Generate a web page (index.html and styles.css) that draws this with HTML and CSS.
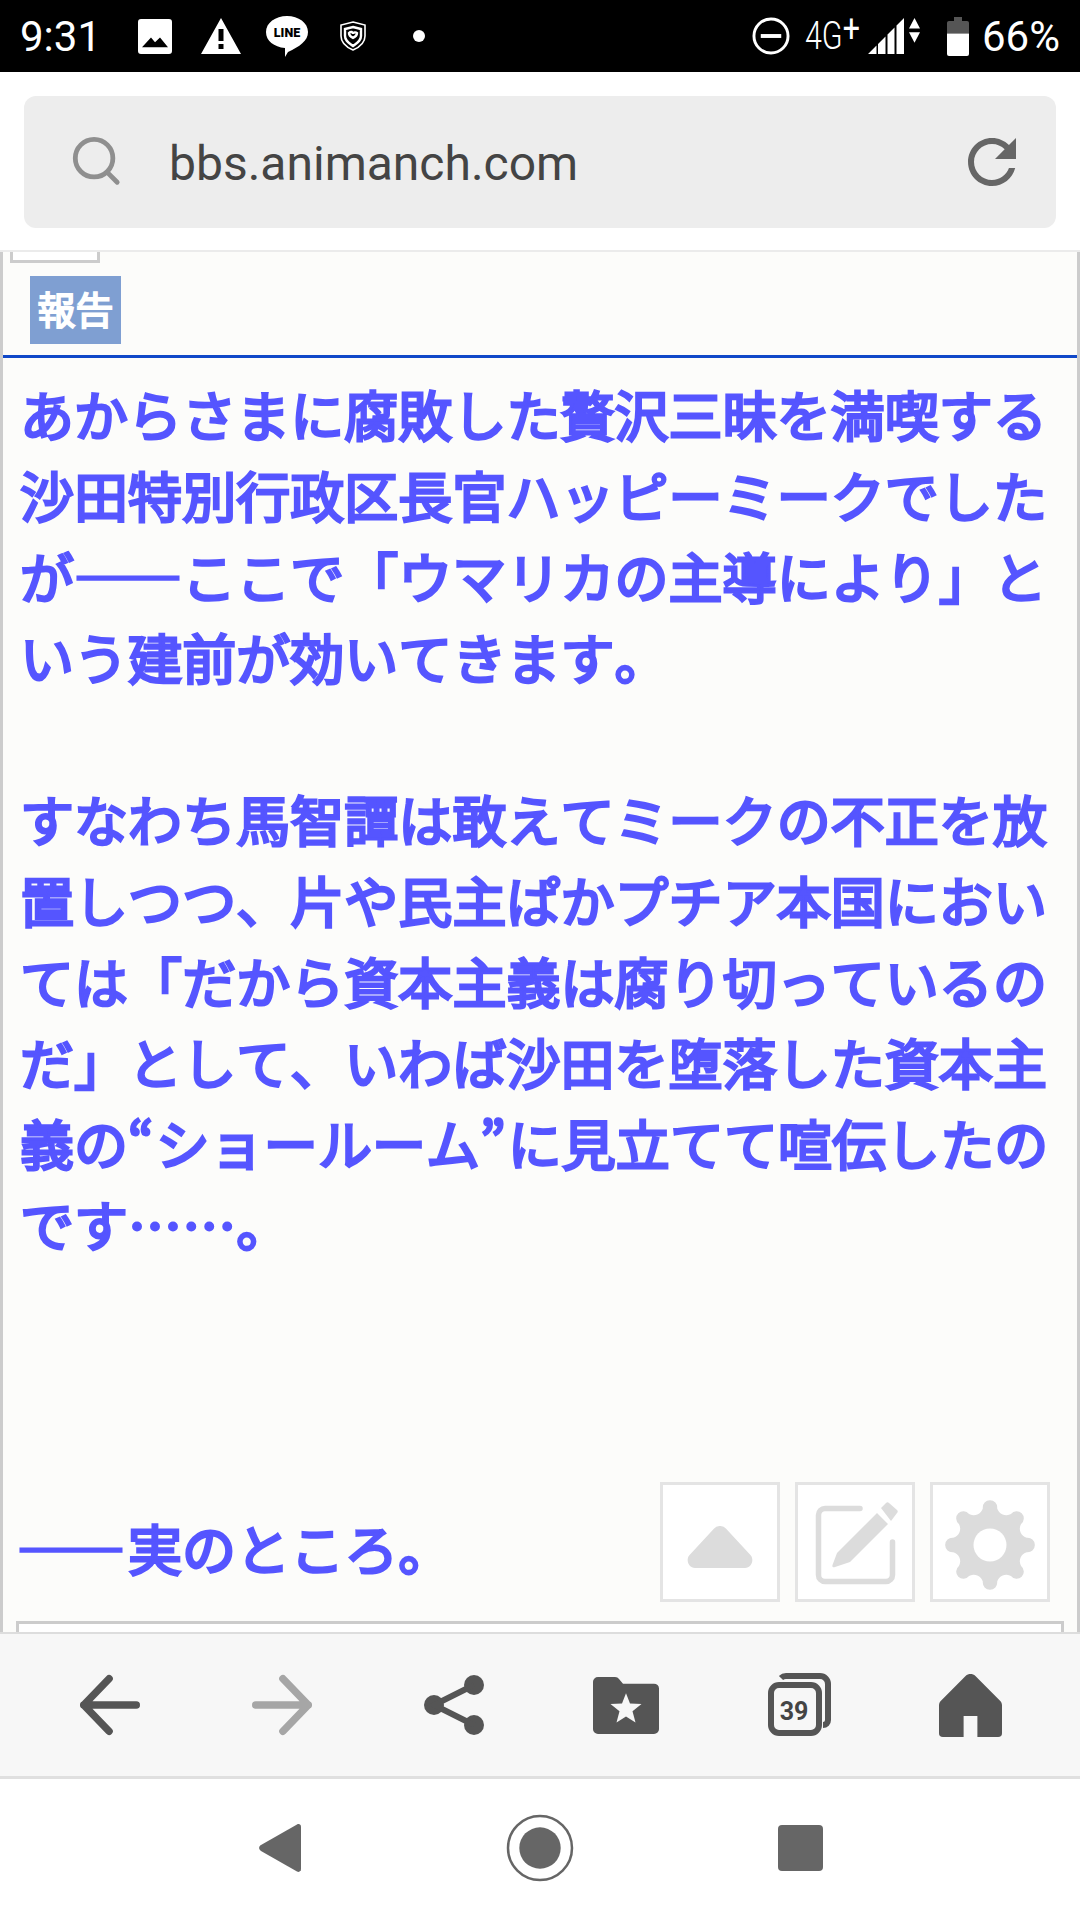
FILE: index.html
```html
<!DOCTYPE html>
<html lang="ja">
<head>
<meta charset="utf-8">
<title>bbs.animanch.com</title>
<link rel="stylesheet" href="styles.css">
</head>
<body>
<div class="screen">
  <header class="status">
    <div class="status-left">
      <span class="clock">9:31</span>
      <svg class="ic-image" width="34" height="35" viewBox="0 0 34 36" preserveAspectRatio="none"><path fill="#fff" fill-rule="evenodd" d="M3 0h28a3 3 0 0 1 3 3v30a3 3 0 0 1-3 3H3a3 3 0 0 1-3-3V3a3 3 0 0 1 3-3zM4 29h26l-8-10-5 5-4-5z"/></svg>
      <svg class="ic-warn" width="40" height="36" viewBox="0 0 40 36"><path fill="#fff" fill-rule="evenodd" d="M20 0L40 36H0zM17.500 11v12h5V11zM17.500 26v5h5v-5z"/></svg>
      <svg class="ic-line" width="42" height="41" viewBox="0 0 42 41"><path fill="#fff" d="M21 0c11.600 0 21 6.800 21 16 0 9-8.500 14.500-20 20l-3 5v-9C8 31 0 25 0 16 0 6.800 9.400 0 21 0z"/><text class="line-label" x="21" y="21" text-anchor="middle">LINE</text></svg>
      <svg class="ic-shield" width="26" height="30" viewBox="0 0 26 30"><path fill="none" stroke="#fff" stroke-width="1.600" d="M13 1l12 3v11c0 7-5 11-12 14C6 26 1 22 1 15V4z"/><path fill="none" stroke="#fff" stroke-width="2.400" d="M13 6l8 2v7c0 5-4 7-8 10-4-3-8-5-8-10V8zM9 12c2-2 4-1 4 1 0-2 3-2 4-1 0 3-2 4-4 5-2-1-4-2-4-5z"/></svg>
      <span class="dot"></span>
    </div>
    <div class="status-right">
      <svg class="ic-dnd" width="38" height="38" viewBox="0 0 39 39"><circle cx="19.500" cy="19.500" r="17.500" fill="none" stroke="#fff" stroke-width="3"/><rect x="9" y="17.500" width="21" height="4" fill="#fff"/></svg>
      <span class="net">4G<span class="net-plus">+</span></span>
      <svg class="ic-signal" width="53" height="36" viewBox="0 0 53 38" preserveAspectRatio="none"><path fill="#fff" d="M0 38L8.500 29V38zM10 27.400L17.500 19.500V38H10zM19.500 17.400L26.500 10V38H19.500zM28.500 7.900L36 0V38H28.500z"/><path fill="#fff" d="M46.500 0l5.500 11H41zM41 15h11l-5.500 11z"/></svg>
      <svg class="ic-battery" width="22" height="39" viewBox="0 0 22 40" preserveAspectRatio="none"><path fill="#555" d="M7 0h8v4h5a2 2 0 0 1 2 2v11H0V6a2 2 0 0 1 2-2h5z"/><path fill="#fff" d="M0 17h22v21a2 2 0 0 1-2 2H2a2 2 0 0 1-2-2z"/></svg>
      <span class="battery-text">66%</span>
    </div>
  </header>

  <div class="address-wrap">
    <div class="address">
      <svg class="ic-search" width="52" height="52" viewBox="0 0 52 54"><circle cx="24" cy="23" r="19.500" fill="none" stroke="#8f8f8f" stroke-width="5"/><path d="M38 38l10 10" fill="none" stroke="#8f8f8f" stroke-width="5" stroke-linecap="round"/></svg>
      <span class="url">bbs.animanch.com</span>
      <svg class="ic-reload" width="72" height="72" viewBox="0 0 24 24"><path fill="#666" d="M17.650 6.350C16.200 4.900 14.210 4 12 4c-4.420 0-7.990 3.580-7.990 8s3.570 8 7.990 8c3.730 0 6.840-2.550 7.730-6h-2.080c-.82 2.330-3.040 4-5.650 4-3.310 0-6-2.690-6-6s2.690-6 6-6c1.660 0 3.140.69 4.220 1.780L13 11h7V4l-2.350 2.350z"/></svg>
    </div>
  </div>

  <main class="page">
    <div class="stub"></div>
    <div class="report-row"><span class="report">報告</span></div>
    <div class="post">あからさまに腐敗した贅沢三昧を満喫する<br>沙田特別行政区長官ハッピーミークでした<br>が——ここで「ウマリカの主導により」と<br>いう建前が効いてきます。<br><br>すなわち馬智譚は敢えてミークの不正を放<br>置しつつ、片や民主ぱかプチア本国におい<br>ては「だから資本主義は腐り切っているの<br>だ」として、いわば沙田を堕落した資本主<br>義の<span class="quote">“</span>ショールーム<span class="quote">”</span>に見立てて喧伝したの<br>です……。<br><br><br><br><span class="dash-start">——</span>実のところ。</div>
    <div class="next-box"></div>
    <div class="float-tools">
      <div class="float-btn">
        <svg class="ic-up" width="66" height="42" viewBox="0 0 70 46" preserveAspectRatio="none"><path fill="#dcdcdc" d="M28.500 3a8.500 8.500 0 0 1 13 0l26 29c4 5 1 14-6 14H8.500c-7 0-10-9-6-14z"/></svg>
      </div>
      <div class="float-btn">
        <svg width="88" height="88" viewBox="-2 -2 88 88"><path fill="none" stroke="#dcdcdc" stroke-width="5.500" stroke-linecap="round" d="M47 8.500H12a6.500 6.500 0 0 0-6.500 6.500V75a6.500 6.500 0 0 0 6.500 6.500h61a6.500 6.500 0 0 0 6.500-6.500V42"/><path fill="#dcdcdc" d="M64 13L75 24 37 62 22 67c-2 .5-3 0-2.500-2L24 53zM68 8l5-5c1-1 2-1 3 0l8 7c1 1 1 2 0 3l-6 8z"/></svg>
      </div>
      <div class="float-btn">
        <svg class="ic-gear" width="90" height="90" viewBox="0 0 90 90"><path fill="#dcdcdc" fill-rule="evenodd" d="M37.850 8.190A7.200 7.200 0 1 1 52.150 8.190A9.400 9.400 0 0 0 65.970 13.910A7.200 7.200 0 1 1 76.090 24.030A9.400 9.400 0 0 0 81.810 37.850A7.200 7.200 0 1 1 81.810 52.150A9.400 9.400 0 0 0 76.090 65.970A7.200 7.200 0 1 1 65.970 76.090A9.400 9.400 0 0 0 52.150 81.810A7.200 7.200 0 1 1 37.850 81.810A9.400 9.400 0 0 0 24.030 76.090A7.200 7.200 0 1 1 13.910 65.970A9.400 9.400 0 0 0 8.190 52.150A7.200 7.200 0 1 1 8.190 37.850A9.400 9.400 0 0 0 13.910 24.030A7.200 7.200 0 1 1 24.030 13.910A9.400 9.400 0 0 0 37.850 8.190Z"/><circle cx="45" cy="45" r="16.500" fill="#fff"/></svg>
      </div>
    </div>
  </main>

  <nav class="toolbar">
    <div class="tool"><svg width="60" height="62" viewBox="0 0 64 66"><path fill="none" stroke="#555" stroke-width="8" stroke-linecap="round" stroke-linejoin="round" d="M31 5L4 33l27 28M4 33h56"/></svg></div>
    <div class="tool"><svg width="60" height="62" viewBox="0 0 64 66"><path fill="none" stroke="#a6a6a6" stroke-width="8" stroke-linecap="round" stroke-linejoin="round" d="M33 5l27 28-27 28M60 33H4"/></svg></div>
    <div class="tool"><svg width="60" height="60" viewBox="0 0 60 60"><g fill="#555"><circle cx="50" cy="10" r="10"/><circle cx="10" cy="30" r="10"/><circle cx="50" cy="50" r="10"/></g><path fill="none" stroke="#555" stroke-width="6" d="M50 10L10 30l40 20"/></svg></div>
    <div class="tool"><svg width="66" height="57" viewBox="0 0 66 60" preserveAspectRatio="none"><path fill="#555" d="M5 0h17c2 0 3 1 4 2l4 5h31a5 5 0 0 1 5 5v43a5 5 0 0 1-5 5H5a5 5 0 0 1-5-5V5a5 5 0 0 1 5-5z"/><path fill="#f7f7f7" d="M33 17l4 11 11.500.5-9 7.500 3 12-9.500-6.500-9.500 6.500 3-12-9-7.500 11.500-.5z"/></svg></div>
    <div class="tool tool-tabs"><svg width="64" height="64" viewBox="0 0 64 64"><path fill="none" stroke="#555" stroke-width="6" d="M13 5c1-1 3-2 5-2h34a8 8 0 0 1 8 8v36c0 3-2 5-5 5"/><rect x="3" y="12" width="48" height="48" rx="8" fill="#f7f7f7" stroke="#555" stroke-width="6"/><text class="tab-count" x="26" y="46.500" text-anchor="middle">39</text></svg></div>
    <div class="tool tool-home"><svg width="63" height="63" viewBox="0 0 64 66" preserveAspectRatio="none"><path fill="#555" d="M27 2c3-2.500 7-2.500 10 0l25 26c1.500 1.500 2 3 2 5v29a4 4 0 0 1-4 4H39V44H25v22H4a4 4 0 0 1-4-4V33c0-2 .5-3.500 2-5z"/></svg></div>
  </nav>

  <footer class="navbar">
    <div class="nav-cell"><svg width="42" height="48" viewBox="0 0 42 50" preserveAspectRatio="none"><path fill="#666" d="M38 .5c2-1 4 0 4 2.500v44c0 2.500-2 3.500-4 2.500L2 28c-2.500-1.500-2.500-4.500 0-6z"/></svg></div>
    <div class="nav-cell"><svg width="68" height="68" viewBox="0 0 68 68"><circle cx="34" cy="34" r="32" fill="none" stroke="#666" stroke-width="2.500"/><circle cx="34" cy="34" r="20.700" fill="#666"/></svg></div>
    <div class="nav-cell"><span class="nav-square"></span></div>
  </footer>
</div>
</body>
</html>
```
FILE: styles.css
```css
* { box-sizing: border-box; }
html, body { margin: 0; padding: 0; }
body { background: #fff; font-family: "Noto Sans CJK JP", "Noto Sans", sans-serif; }
.screen { width: 1080px; height: 1920px; display: flex; flex-direction: column; overflow: hidden; }

.status { height: 72px; flex: none; background: #000; color: #fff; display: flex; justify-content: space-between; align-items: center; font-family: Roboto, sans-serif; padding: 0 20px; }
.status-left, .status-right { display: flex; align-items: center; }
.clock { font-size: 42px; width: 118px; }
.ic-warn { margin-left: 29px; }
.ic-line { margin-left: 25px; }
.ic-shield { margin-left: 32px; }
.line-label { font-family: Roboto, sans-serif; font-weight: 900; font-size: 12.500px; fill: #000; }
.dot { width: 12px; height: 12px; border-radius: 50%; background: #fff; margin-left: 47px; }
.ic-dnd { margin-right: 15px; }
.net { font-size: 38px; font-weight: 300; display: inline-block; width: 60px; margin-right: 3px; transform: scaleX(.8); transform-origin: left center; white-space: nowrap; }
.net-plus { font-size: 38px; font-weight: 400; position: relative; top: -7px; }
.ic-signal { margin-right: 26px; }
.battery-text { font-size: 42px; margin-left: 13px; }

.address-wrap { height: 180px; flex: none; padding: 24px 24px 22px; background: #fff; border-bottom: 2px solid #ebebeb; }
.address { height: 132px; background: #ededed; border-radius: 12px; display: flex; align-items: center; padding: 0 28px 0 46px; }
.url { flex: 1; font-family: Roboto, sans-serif; font-size: 48px; color: #444; margin-left: 47px; padding-top: 2px; }

.page { flex: 1; min-height: 0; position: relative; overflow: hidden; background: #fcfcfa; border-left: 3px solid #ccc; border-right: 3px solid #ccc; }
.stub { width: 90px; height: 11px; margin-left: 7px; background: #fff; border: 3px solid #ccc; border-top: 0; }
.report-row { padding: 13px 0 11px 27px; border-bottom: 3px solid #1048c8; }
.report { display: block; width: 91px; height: 68px; background: #7f9fd2; color: #fff; font-weight: 400; -webkit-text-stroke: 1.8px #fff; font-size: 38px; line-height: 64px; text-align: center; }
.post { padding: 15px 0 0 17px; font-size: 54px; line-height: 81px; font-weight: 400; -webkit-text-stroke: 2.8px #5555ff; color: #5555ff; white-space: nowrap; letter-spacing: .05px; font-kerning: none; text-spacing-trim: space-all; }
.quote { letter-spacing: 2px; }
.dash-start { margin-left: -3px; letter-spacing: 3px; }
.next-box { margin: 33px 13px 0; height: 40px; background: #fff; border: 3px solid #ccc; }
.float-tools { position: absolute; top: 1230px; right: 27px; display: flex; gap: 15px; }
.float-btn { width: 120px; height: 120px; background: #fff; border: 3px solid #e4e4e4; display: flex; align-items: center; justify-content: center; }
.ic-up { margin-top: 10px; }
.ic-gear { margin-top: 6px; }

.toolbar { height: 147px; flex: none; background: #f7f7f7; border-top: 2px solid #ddd; border-bottom: 3px solid #e0e0e0; display: flex; padding: 0 24px; }
.tool { width: 172px; display: flex; align-items: center; justify-content: center; }
.tool-tabs { padding-left: 3px; }
.tool-home { padding-left: 1px; }
.tab-count { font-family: Roboto, sans-serif; font-weight: 700; font-size: 25px; fill: #444; }

.navbar { height: 141px; flex: none; background: #fff; display: flex; justify-content: center; align-items: center; padding-bottom: 3px; }
.nav-cell { width: 260px; display: flex; align-items: center; justify-content: center; }
.nav-square { width: 45px; height: 46px; background: #666; border-radius: 4px; }
```
